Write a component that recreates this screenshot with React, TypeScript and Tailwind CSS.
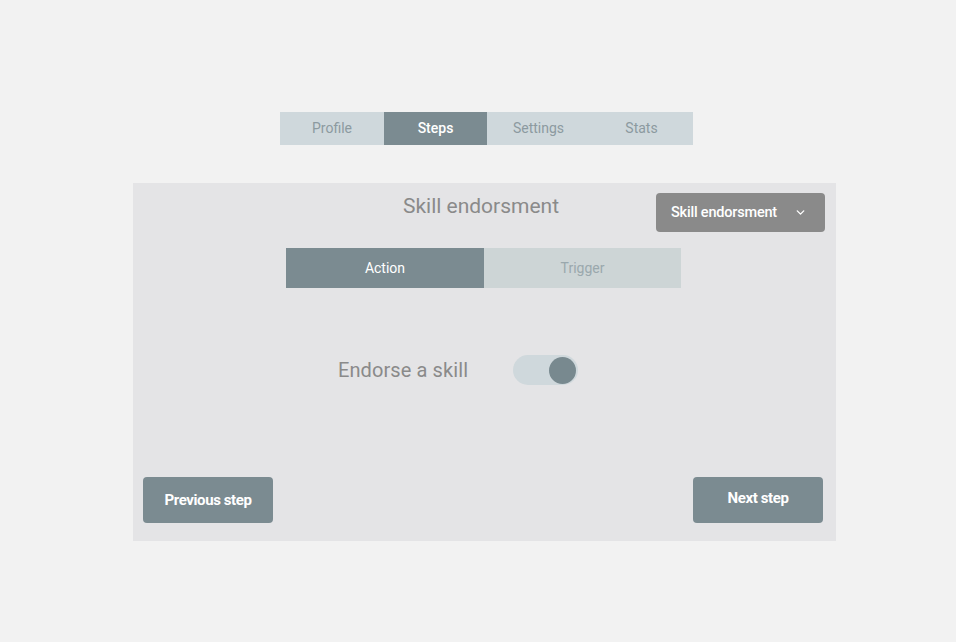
import { ChevronDown } from 'lucide-react';

const tabs = ['Profile', 'Steps', 'Settings', 'Stats'];

const App = () => {
  return (
    <div
      className="min-h-[642px] w-full bg-[#f2f2f2] flex flex-col items-center"
      style={{ fontFamily: 'Roboto, "Liberation Sans", sans-serif' }}
    >
      {/* top tabs */}
      <div className="mt-[112px] flex ml-[17px]">
        {tabs.map((t) => (
          <div
            key={t}
            className={`h-[33px] w-[103px] first:w-[104px] flex items-center justify-center text-[14px] ${
              t === 'Steps'
                ? 'bg-[#7b8b91] text-white font-medium'
                : 'bg-[#cfd8dc] text-[#8c9aa0]'
            }`}
          >
            {t}
          </div>
        ))}
      </div>

      {/* panel */}
      <div className="mt-[38px] ml-[13px] w-[703px] h-[358px] bg-[#e4e4e6] flex flex-col pt-[10px] pl-[10px] pr-[11px] pb-[18px]">
        <div className="grid grid-cols-[1fr_auto_1fr] h-[40px]">
          <div />
          <div className="text-[21px] text-[#8a8a8a] leading-none pt-[3px] -ml-[6px]">
            Skill endorsment
          </div>
          <div className="flex justify-end">
            <button className="w-[169px] h-[39px] rounded-[4px] bg-[#8a8a8a] text-white text-[14.5px] font-medium tracking-[-0.2px] flex items-center pl-[15px] pr-[18px] justify-between">
              <span>Skill endorsment</span>
              <ChevronDown size={13} strokeWidth={2.5} />
            </button>
          </div>
        </div>

        {/* action / trigger */}
        <div className="mt-[15px] flex justify-center -ml-[1px]">
          <div className="w-[198px] h-[40px] bg-[#7b8b91] text-white text-[14px] flex items-center justify-center">
            Action
          </div>
          <div className="w-[197px] h-[40px] bg-[#cdd5d6] text-[#9aa8ad] text-[14px] flex items-center justify-center">
            Trigger
          </div>
        </div>

        {/* toggle row */}
        <div className="mt-[67px] flex items-center pl-[195px]">
          <span className="text-[20px] text-[#8a8a8a] tracking-[0.1px]">Endorse a skill</span>
          <div className="ml-[45px] w-[65px] h-[30px] rounded-full bg-[#cfd8dc] flex items-center justify-end pr-[2px]">
            <div className="w-[27px] h-[27px] rounded-full bg-[#78898f]" />
          </div>
        </div>

        {/* footer buttons */}
        <div className="mt-auto flex justify-between pr-[2px]">
          <button className="w-[130px] h-[46px] rounded-[4px] bg-[#7b8b91] text-white text-[15px] font-bold tracking-[-0.4px] pt-[1px]">
            Previous step
          </button>
          <button className="w-[130px] h-[46px] rounded-[4px] bg-[#7b8b91] text-white text-[15px] font-bold tracking-[-0.4px] pb-[3px]">
            Next step
          </button>
        </div>
      </div>
    </div>
  );
};

export default App;
